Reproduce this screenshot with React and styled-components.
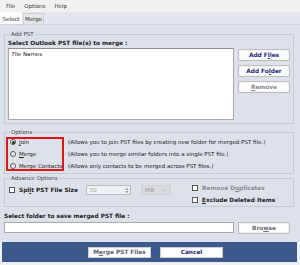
import React from "react";
import styled, { createGlobalStyle } from "styled-components";

const GlobalStyle = createGlobalStyle`
  html, body {
    margin: 0;
    padding: 0;
    background: #eef0f3;
  }
  body {
    font-family: "DejaVu Sans", Verdana, sans-serif;
    font-size: 5.5px;
    color: #222;
  }
`;

const options = [
  { key: "join", label: "Join", hot: 0, desc: "(Allows you to join PST files by creating new folder for merged PST file.)", checked: true },
  { key: "merge", label: "Merge", hot: 0, desc: "(Allows you to merge similar folders into a single PST file.)" },
  { key: "contacts", label: "Merge Contacts", hot: 6, desc: "(Allows only contacts to be merged across PST files.)" },
];

const Hot = ({ text, at }) => (
  <>
    {text.slice(0, at)}
    <u>{text[at]}</u>
    {text.slice(at + 1)}
  </>
);

const App = () => {
  return (
    <>
      <GlobalStyle />
      <Window>
        <MenuBar>
          <MenuItem>File</MenuItem>
          <MenuItem>Options</MenuItem>
          <MenuItem>Help</MenuItem>
        </MenuBar>
        <TabStrip>
          <Tab active>Select</Tab>
          <Tab>Merge</Tab>
        </TabStrip>
        <Page>
          <Group height={94} pad={2}>
            <Legend>Add PST</Legend>
            <BoldLabel>Select Outlook PST file(s) to merge :</BoldLabel>
            <FileRow>
              <FileList>
                <ListHeader>File Names</ListHeader>
              </FileList>
              <ButtonColumn>
                <SideButton>
                  <Hot text="Add Files" at={5} />
                </SideButton>
                <SideButton>
                  <Hot text="Add Folder" at={6} />
                </SideButton>
                <SideButton disabled>
                  <Hot text="Remove" at={0} />
                </SideButton>
              </ButtonColumn>
            </FileRow>
          </Group>

          <Group top={4}>
            <Legend>Options</Legend>
            <OptionList>
              {options.map((o) => (
                <OptionRow key={o.key}>
                  <RadioCell>
                    <Radio checked={o.checked} />
                    <span>
                      <Hot text={o.label} at={o.hot} />
                    </span>
                  </RadioCell>
                  <Desc>{o.desc}</Desc>
                </OptionRow>
              ))}
              <Highlight />
            </OptionList>
          </Group>

          <Group>
            <Legend>Advance Options</Legend>
            <AdvanceRow>
              <SplitGroup>
                <Check />
                <CheckLabel>
                  <Hot text="Split PST File Size" at={3} />
                </CheckLabel>
                <NumberBox>
                  <span>50</span>
                  <svg width="4" height="7" viewBox="0 0 4 7">
                    <path d="M0.5 2.8 L2 1 L3.5 2.8 Z" fill="#888" />
                    <path d="M0.5 4.2 L2 6 L3.5 4.2 Z" fill="#888" />
                  </svg>
                </NumberBox>
                <UnitSelect>
                  <span>MB</span>
                  <svg width="5" height="4" viewBox="0 0 5 4">
                    <path d="M0.5 1 L2.5 3 L4.5 1" stroke="#b5b5b5" strokeWidth="0.7" fill="none" />
                  </svg>
                </UnitSelect>
              </SplitGroup>
              <CheckColumn>
                <CheckRow>
                  <Check />
                  <CheckLabel dim>
                    <Hot text="Remove Duplicates" at={8} />
                  </CheckLabel>
                </CheckRow>
                <CheckRow>
                  <Check />
                  <CheckLabel>
                    <Hot text="Exclude Deleted Items" at={0} />
                  </CheckLabel>
                </CheckRow>
              </CheckColumn>
            </AdvanceRow>
          </Group>

          <SaveLabel>Select folder to save merged PST file :</SaveLabel>
          <SaveRow>
            <PathInput />
            <SideButton dim>
              <Hot text="Browse" at={3} />
            </SideButton>
          </SaveRow>
        </Page>
        <BottomBar>
          <BarButton dim>
            <Hot text="Merge PST Files" at={1} />
          </BarButton>
          <BarButton>Cancel</BarButton>
        </BottomBar>
      </Window>
    </>
  );
};

const Window = styled.div`
  width: 300px;
  height: 265px;
  display: flex;
  flex-direction: column;
  background: #eef0f3;
  overflow: hidden;
`;

const MenuBar = styled.div`
  height: 12px;
  display: flex;
  align-items: center;
  gap: 9px;
  padding-left: 6px;
  background: #f1f1f1;
  color: #333;
`;

const MenuItem = styled.span`
  line-height: 12px;
`;

const TabStrip = styled.div`
  height: 12px;
  display: flex;
  align-items: flex-end;
  gap: 1px;
  background: #e3e6ec;
  border-bottom: 1px solid #cfd3dc;
`;

const Tab = styled.div`
  width: ${(p) => (p.active ? "22px" : "21px")};
  height: ${(p) => (p.active ? "12px" : "11px")};
  display: flex;
  align-items: center;
  justify-content: center;
  box-sizing: border-box;
  background: ${(p) => (p.active ? "#fafbfc" : "#e4e5e8")};
  border: 1px solid ${(p) => (p.active ? "#fafbfc" : "#cfd1d6")};
  border-bottom: none;
  color: #333;
`;

const Page = styled.div`
  flex: 1;
  min-height: 0;
  display: flex;
  flex-direction: column;
  padding: 5px 6px 0 4px;
  background: #dde1ea;
`;

const Group = styled.fieldset`
  margin: ${(p) => p.top || 0}px 0 0 0;
  padding: ${(p) => p.pad || 0}px 3px 0 3px;
  border: 1px solid #c6cbd6;
  height: ${(p) => (p.height ? `${p.height}px` : "auto")};
  box-sizing: border-box;
  min-width: 0;
`;

const Legend = styled.legend`
  margin-left: 2px;
  padding: 0 1px;
  line-height: 8px;
  color: #444;
`;

const BoldLabel = styled.div`
  font-weight: bold;
  font-size: 5.8px;
  line-height: 7px;
  color: #1b1b1b;
  margin-bottom: 1px;
`;

const FileRow = styled.div`
  display: flex;
  gap: 4px;
`;

const FileList = styled.div`
  width: 226px;
  height: 72px;
  box-sizing: border-box;
  background: #fff;
  border: 1px solid #a7a7a7;
  border-top-color: #8d8d8d;
  padding: 2px 3px;
`;

const ListHeader = styled.div`
  line-height: 7px;
  color: #222;
`;

const ButtonColumn = styled.div`
  display: flex;
  flex-direction: column;
  gap: 4px;
  padding-top: 0.5px;
`;

const SideButton = styled.div`
  width: 52px;
  height: 12px;
  box-sizing: border-box;
  display: flex;
  align-items: center;
  justify-content: center;
  background: #fdfdfd;
  border: 1px solid #bdbdbd;
  box-shadow: inset 0 0 0 1px #f4f4f4;
  font-weight: bold;
  font-size: 5.8px;
  color: ${(p) => (p.disabled ? "#8a8a9a" : p.dim ? "#6a6a7a" : "#1f2a7c")};
`;

const OptionList = styled.div`
  position: relative;
  display: flex;
  flex-direction: column;
  margin-left: -3px;
  padding-bottom: 1px;
`;

const OptionRow = styled.div`
  height: 12px;
  display: flex;
  align-items: center;
`;

const RadioCell = styled.div`
  width: 63px;
  display: flex;
  align-items: center;
  gap: 3px;
  padding-left: 5px;
  box-sizing: border-box;
  color: #222;
`;

const Radio = styled.span`
  width: 6px;
  height: 6px;
  box-sizing: border-box;
  border-radius: 50%;
  border: 0.8px solid #555;
  background: #fff;
  display: inline-flex;
  align-items: center;
  justify-content: center;
  &::after {
    content: "";
    width: 3px;
    height: 3px;
    border-radius: 50%;
    background: ${(p) => (p.checked ? "#222" : "transparent")};
  }
`;

const Desc = styled.span`
  color: #222;
  white-space: nowrap;
`;

const Highlight = styled.div`
  position: absolute;
  left: 1px;
  top: 1px;
  width: 58px;
  height: 34px;
  box-sizing: border-box;
  border: 2px solid #e0141b;
  pointer-events: none;
`;

const AdvanceRow = styled.div`
  display: flex;
  align-items: flex-start;
`;

const SplitGroup = styled.div`
  width: 183px;
  height: 12px;
  margin: 2px 0 0 1px;
  display: flex;
  align-items: center;
  flex-shrink: 0;
`;

const Check = styled.span`
  width: 6px;
  height: 6px;
  box-sizing: border-box;
  border: 0.8px solid #555;
  background: #fff;
  flex-shrink: 0;
`;

const CheckLabel = styled.span`
  margin-left: 4px;
  font-weight: bold;
  font-size: 5.8px;
  white-space: nowrap;
  color: ${(p) => (p.dim ? "#8b8b95" : "#222")};
`;

const NumberBox = styled.div`
  width: 45px;
  height: 10px;
  margin-left: 8px;
  box-sizing: border-box;
  display: flex;
  align-items: center;
  justify-content: space-between;
  padding: 0 1px 0 3px;
  background: #eef0f3;
  border: 1px solid #b9bcc3;
  color: #a3a3a3;
  flex-shrink: 0;
`;

const UnitSelect = styled.div`
  width: 30px;
  height: 10px;
  margin-left: 10px;
  box-sizing: border-box;
  display: flex;
  align-items: center;
  justify-content: space-between;
  padding: 0 4px 0 3px;
  background: #d9dadd;
  border: 1px solid #cfd0d3;
  color: #b0b0b0;
  font-weight: bold;
  flex-shrink: 0;
`;

const CheckColumn = styled.div`
  display: flex;
  flex-direction: column;
`;

const CheckRow = styled.div`
  height: 12px;
  display: flex;
  align-items: center;
`;

const SaveLabel = styled.div`
  margin-top: 6px;
  font-weight: bold;
  font-size: 5.8px;
  line-height: 7px;
  color: #1b1b1b;
`;

const SaveRow = styled.div`
  margin-top: 2px;
  display: flex;
  gap: 4px;
`;

const PathInput = styled.div`
  width: 230px;
  height: 11px;
  box-sizing: border-box;
  background: #fff;
  border: 1px solid #a9a9a9;
`;

const BottomBar = styled.div`
  height: 20px;
  flex-shrink: 0;
  margin: 0 3px 3px 2px;
  display: flex;
  align-items: center;
  gap: 9px;
  padding-left: 86px;
  background: #3b5a8b;
`;

const BarButton = styled.div`
  width: 63px;
  height: 11px;
  box-sizing: border-box;
  display: flex;
  align-items: center;
  justify-content: center;
  background: #fdfdfd;
  border: 1px solid #c9ccd2;
  font-weight: bold;
  font-size: 5.8px;
  color: ${(p) => (p.dim ? "#5b5f70" : "#1f2a7c")};
`;

export default App;
